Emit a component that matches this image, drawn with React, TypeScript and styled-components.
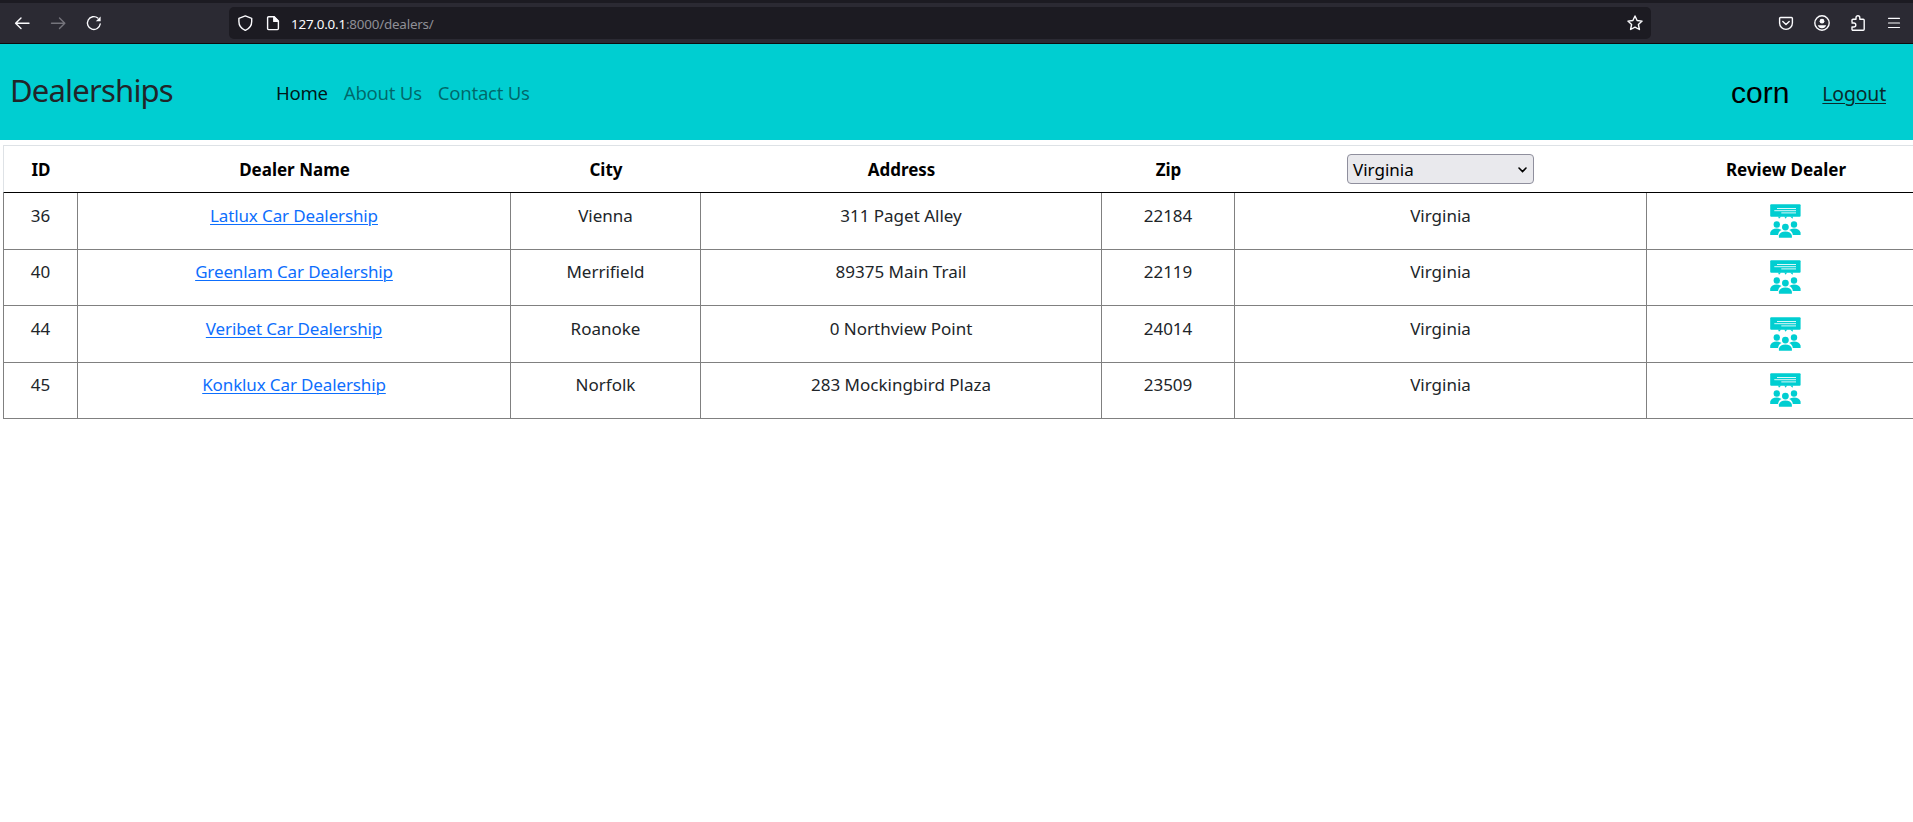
import React from 'react';
import styled, { createGlobalStyle } from 'styled-components';

const Global = createGlobalStyle`
  *, *::before, *::after { box-sizing: border-box; }
  html, body { margin: 0; background: #fff; overflow: hidden; }
  body { font-family: "Noto Sans", "Open Sans", sans-serif; color: #212529; }
`;

const Page = styled.div`
  width: 100%;
  height: 822px;
  overflow: hidden;
`;

const Toolbar = styled.div`
  display: flex;
  align-items: flex-start;
  height: 44px;
  padding-top: 4px;
  background: #2b2a33;
  border-top: 3px solid #1c1b22;
  border-bottom: 1px solid #0c0c0d;
`;

const NavButtons = styled.div`
  display: flex;
  gap: 20px;
  width: 229px;
  padding: 8px 0 0 14px;
`;

const UrlBar = styled.div`
  display: flex;
  align-items: flex-start;
  width: 1422px;
  height: 32px;
  padding: 8px 8px 0 8px;
  border-radius: 5px;
  background: #1c1b22;
`;

const UrlText = styled.div`
  flex: 1;
  margin-left: 10px;
  padding-top: 1px;
  font-size: 13.4px;
  line-height: 16px;
  letter-spacing: -0.2px;
  color: #8f8f96;
  white-space: nowrap;
  b { font-weight: 400; color: #fbfbfe; }
`;

const Tools = styled.div`
  display: flex;
  gap: 20px;
  padding: 8px 0 0 127px;
`;

const Icon = styled.svg<{ $dim?: boolean; $gap?: number }>`
  display: block;
  flex: none;
  width: 16px;
  height: 16px;
  margin-left: ${p => p.$gap ?? 0}px;
  fill: none;
  stroke: ${p => (p.$dim ? '#75747c' : '#fbfbfe')};
  stroke-width: 1.4;
  stroke-linecap: round;
  stroke-linejoin: round;
`;

const Header = styled.header`
  display: flex;
  align-items: flex-start;
  height: 96px;
  padding-left: 10px;
  background: #00ced1;
`;

const Brand = styled.div`
  width: 266px;
  padding-top: 22px;
  font-size: 31px;
  line-height: 48px;
  letter-spacing: -0.8px;
`;

const Nav = styled.nav`
  display: flex;
  flex: 1;
  gap: 16px;
  padding-top: 34px;
`;

const NavLink = styled.a<{ $active?: boolean }>`
  font-size: 18.6px;
  line-height: 30px;
  letter-spacing: -0.27px;
  color: ${p => (p.$active ? 'rgba(0,0,0,.9)' : 'rgba(0,0,0,.5)')};
`;

const User = styled.div`
  padding-top: 34px;
  font: 30px/30px "Liberation Sans", Arial, sans-serif;
  color: #000;
`;

const Logout = styled.a`
  margin: 35px 27px 0 33px;
  font-size: 19.4px;
  line-height: 30px;
  letter-spacing: -0.15px;
  color: #0a2b2c;
  text-decoration: underline;
  text-decoration-thickness: 1px;
  text-underline-offset: 2px;
`;

const Table = styled.div`
  width: 1921px;
  margin: 5px 0 0 3px;
  font-size: 17px;
  line-height: 26px;
  text-align: center;
`;

const Row = styled.div`
  display: grid;
  grid-template-columns: 74px 433px 190px 401px 133px 412px 278px;
  height: 56.5px;
  border-bottom: 1px solid #808080;
`;

const HeadRow = styled(Row)`
  height: 48px;
  border: 1px solid #dee2e6;
  border-bottom-color: #000;
  font-weight: 700;
  color: #000;
`;

const Th = styled.div`
  padding-top: 11px;
`;

const Td = styled.div`
  padding-top: 9.6px;
  border-left: 1px solid #808080;
`;

const DealerLink = styled.a`
  color: #0d6efd;
  letter-spacing: -0.13px;
  text-decoration: underline;
  text-decoration-thickness: 1px;
  text-underline-offset: 2px;
`;

const StateSelect = styled.div`
  display: flex;
  justify-content: space-between;
  align-items: center;
  width: 187px;
  height: 30px;
  margin: -3px 0 0 112px;
  padding: 1px 6px 0 5px;
  border: 1px solid #8f8f9d;
  border-radius: 4px;
  background: #e9e9ed;
  font-weight: 400;
`;

const Chevron = styled.svg`
  width: 9px;
  height: 6px;
  fill: none;
  stroke: #000;
  stroke-width: 1.6;
  stroke-linecap: round;
`;

const ReviewSvg = styled.svg`
  display: block;
  width: 31px;
  height: 34px;
  margin: 1.4px auto 0;
  fill: #00ced1;
`;

const ReviewIcon = () => (
  <ReviewSvg viewBox="0 0 31 34">
    <rect x="0.2" y="0.3" width="30.4" height="12.4" rx="1" />
    <path d="M8 12.5h3.2L9 14.8zM14.2 12.5h3l-1.6 2.3zM20 12.5h3l-.4 2.3z" />
    <path d="M7 4.5h19M4.3 6.7H26M11.3 8.9H26" stroke="#fff" strokeOpacity=".85" strokeWidth="1" />
    <circle cx="6.8" cy="20.5" r="3.2" />
    <circle cx="24" cy="20.5" r="3.2" />
    <circle cx="15.4" cy="23.1" r="3.4" />
    <path d="M.2 31v-2.6q1.4-3.8 6.6-3.8 3 0 4.8 1.5-3.2 1.5-3.6 4.9z" />
    <path d="M30.6 31v-2.6q-1.4-3.8-6.6-3.8-3 0-4.8 1.5 3.2 1.5 3.6 4.9z" />
    <path d="M8.9 33.8v-2.2q1.2-4 6.5-4t6.5 4v2.2z" />
  </ReviewSvg>
);

const dealers = [
  [36, 'Latlux Car Dealership', 'Vienna', '311 Paget Alley', '22184'],
  [40, 'Greenlam Car Dealership', 'Merrifield', '89375 Main Trail', '22119'],
  [44, 'Veribet Car Dealership', 'Roanoke', '0 Northview Point', '24014'],
  [45, 'Konklux Car Dealership', 'Norfolk', '283 Mockingbird Plaza', '23509'],
];

export default function App() {
  return (
    <Page>
      <Global />
      <Toolbar>
        <NavButtons>
          <Icon viewBox="0 0 16 16"><path d="M15 8.3H1.8M7 3L1.6 8.3 7 13.6" /></Icon>
          <Icon viewBox="0 0 16 16" $dim><path d="M1.5 8.3h13M9.5 3l5.3 5.3-5.3 5.3" /></Icon>
          <Icon viewBox="0 0 16 16"><path d="M11.8 3A6.4 6.4 0 1 0 14.2 9" /><path d="M14.6 1.5v4.8H9.8z" fill="#fbfbfe" stroke="none" /></Icon>
        </NavButtons>
        <UrlBar>
          <Icon viewBox="0 0 16 16"><path d="M8.3.9l6.4 2.4v3.2c0 4.2-2.6 7.3-6.4 8.9-3.8-1.6-6.4-4.7-6.4-8.9V3.3z" /></Icon>
          <Icon viewBox="0 0 16 16" $gap={12}><path d="M3.6 1.7h5.6L13.4 6v7.6a1 1 0 0 1-1 1H3.6a1 1 0 0 1-1-1V2.7a1 1 0 0 1 1-1z" /><path d="M8.8 1.7V6.4h4.6z" fill="#fbfbfe" /></Icon>
          <UrlText><b>127.0.0.1</b>:8000/dealers/</UrlText>
          <Icon viewBox="0 0 16 16"><path d="M8 1l2.1 4.5 5 .6-3.7 3.4 1 5L8 12.1l-4.4 2.4 1-5L.9 6.1l5-.6z" /></Icon>
        </UrlBar>
        <Tools>
          <Icon viewBox="0 0 16 16"><path d="M2.6 2.5h10.8a1 1 0 0 1 1 1V8a6.4 6.4 0 0 1-12.8 0V3.5a1 1 0 0 1 1-1zM4.8 6.6L8 9.6l3.2-3" /></Icon>
          <Icon viewBox="0 0 16 16"><circle cx="8" cy="8" r="7.2" /><circle cx="8" cy="6.2" r="2.4" fill="#fbfbfe" stroke="none" /><path d="M3.8 10.2h8.4q-1 3-4.2 3t-4.2-3z" fill="#fbfbfe" stroke="none" /></Icon>
          <Icon viewBox="0 0 16 16"><path d="M2 7V5.2a1 1 0 0 1 1-1h3V2.7a1.9 1.9 0 0 1 3.8 0v1.5h3.4a1 1 0 0 1 1 1v9a1 1 0 0 1-1 1H3a1 1 0 0 1-1-1V12h1.8a2 2 0 0 0 0-4H2" /></Icon>
          <Icon viewBox="0 0 16 16"><path d="M2.5 3.3h11M2.5 8h11M2.5 12.5h11" strokeWidth="1.2" /></Icon>
        </Tools>
      </Toolbar>
      <Header>
        <Brand>Dealerships</Brand>
        <Nav>
          <NavLink $active>Home</NavLink>
          <NavLink>About Us</NavLink>
          <NavLink>Contact Us</NavLink>
        </Nav>
        <User>corn</User>
        <Logout>Logout</Logout>
      </Header>
      <Table>
        <HeadRow>
          <Th>ID</Th>
          <Th>Dealer Name</Th>
          <Th>City</Th>
          <Th>Address</Th>
          <Th>Zip</Th>
          <Th><StateSelect>Virginia<Chevron viewBox="0 0 9 6"><path d="M1 1l3.5 3.5L8 1" /></Chevron></StateSelect></Th>
          <Th>Review Dealer</Th>
        </HeadRow>
        {dealers.map(([id, name, city, address, zip]) => (
          <Row key={id}>
            <Td>{id}</Td>
            <Td><DealerLink>{name}</DealerLink></Td>
            <Td>{city}</Td>
            <Td>{address}</Td>
            <Td>{zip}</Td>
            <Td>Virginia</Td>
            <Td><ReviewIcon /></Td>
          </Row>
        ))}
      </Table>
    </Page>
  );
}
